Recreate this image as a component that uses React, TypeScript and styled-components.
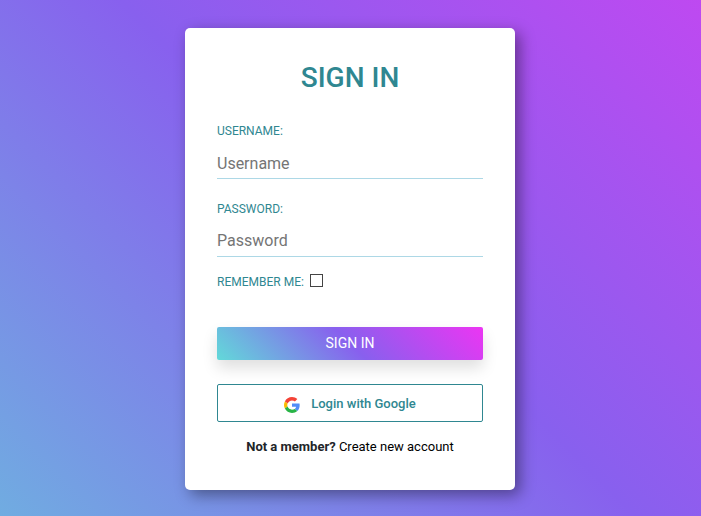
import React from "react";
import styled, { createGlobalStyle } from "styled-components";

const GlobalStyle = createGlobalStyle`
  * { box-sizing: border-box; }
  body { margin: 0; font-family: Roboto, "Liberation Sans", sans-serif; }
`;

const Page = styled.main`
  display: flex;
  justify-content: center;
  align-items: flex-start;
  height: 516px;
  padding: 28px 1px 0 0;
  overflow: hidden;
  background: linear-gradient(45deg, #62d9d9 -30.7%, #8860ee 52.3%, #e937f3 138%);
`;

const Card = styled.form`
  display: flex;
  flex-direction: column;
  width: 330px;
  height: 462px;
  padding: 32px;
  border-radius: 5px;
  background: #fff;
  box-shadow: 5px 5px 15px rgba(0, 0, 0, 0.4);
`;

const Title = styled.h1`
  margin: 0 0 28px;
  color: #2f8791;
  font-size: 28px;
  font-weight: 500;
  line-height: 35px;
  text-align: center;
`;

const Label = styled.label`
  color: #2f8791;
  font-size: 12px;
  line-height: 16px;
`;

const Field = styled.div<{ $gap: number }>`
  display: flex;
  flex-direction: column;
  margin-bottom: ${({ $gap }) => $gap}px;
`;

const Input = styled.input<{ $top?: number }>`
  height: 32px;
  margin-top: 8px;
  padding: ${({ $top = 0 }) => $top}px 0 0;
  border: 0;
  border-bottom: 1px solid lightblue;
  outline: none;
  background: #fff;
  font: 16px Roboto, sans-serif;

  &::placeholder { color: #757575; }
`;

const Remember = styled.div`
  display: flex;
  align-items: center;
  height: 18px;
`;

const Checkbox = styled.input`
  appearance: none;
  width: 13px;
  height: 13px;
  margin: 0 0 3px 6px;
  border: 1px solid #444;
  background: #fff;
`;

const SubmitButton = styled.button`
  height: 33px;
  flex-shrink: 0;
  margin-top: 36px;
  padding: 0 0 2px;
  border: 0;
  border-radius: 2px;
  background: linear-gradient(45deg, #62d9d9, #8860ee, #ec35f3);
  box-shadow: 0 8px 15px rgba(0, 0, 0, 0.13);
  color: #fff;
  font: 14px Roboto, sans-serif;
`;

const GoogleButton = styled.button`
  display: flex;
  justify-content: center;
  align-items: center;
  height: 38px;
  flex-shrink: 0;
  margin-top: 24px;
  padding: 0;
  border: 1px solid #2f8791;
  border-radius: 2px;
  background: #fff;
  color: #2f8791;
  font: 500 13px Roboto, sans-serif;
`;

const GoogleMark = styled.svg`
  width: 16px;
  height: 16px;
  margin: 3px 11px 0 0;
`;

const Footer = styled.p`
  margin: 16px 0 0;
  color: #000;
  font-size: 13px;
  line-height: 18px;
  text-align: center;

  strong { color: #212529; font-weight: 700; }
`;

export default function App() {
  return (
    <>
      <GlobalStyle />
      <Page>
        <Card>
          <Title>SIGN IN</Title>
          <Field $gap={22}>
            <Label htmlFor="username">USERNAME:</Label>
            <Input id="username" placeholder="Username" $top={2} />
          </Field>
          <Field $gap={16}>
            <Label htmlFor="password">PASSWORD:</Label>
            <Input id="password" type="password" placeholder="Password" />
          </Field>
          <Remember>
            <Label htmlFor="remember">REMEMBER ME:</Label>
            <Checkbox id="remember" type="checkbox" />
          </Remember>
          <SubmitButton type="button">SIGN IN</SubmitButton>
          <GoogleButton type="button">
            <GoogleMark viewBox="0 0 48 48" aria-hidden="true">
              <path fill="#f44336" d="M2.6 13.2C6.5 5.4 14.6 0 24 0c6.5 0 11.9 2.4 16.1 6.2l-7.4 7.4C30.3 11.5 27.4 10.2 24 10.2c-6.1 0-11.2 4-13.2 9.4z" />
              <path fill="#518ef8" d="M47 24.6c0-1.8-.2-3.5-.5-5.2H24v10h12.4c-.7 2.7-2.1 4.9-4.3 6.4l7.8 6.4C44.4 38 47 31.8 47 24.6z" />
              <path fill="#fbbb00" d="M10.8 28.6c-.6-1.5-.9-3-.9-4.6s.3-3.1.9-4.6l-8.2-6.2C.9 16.5 0 20.1 0 24s.9 7.5 2.6 10.8z" />
              <path fill="#28b446" d="M24 48c6.5 0 11.9-2.1 15.9-5.8l-7.8-6.4c-2.2 1.4-4.8 2.1-8.1 2.1-6.2 0-11.3-3.9-13.2-9.3l-8.2 6.2C6.5 42.6 14.6 48 24 48z" />
            </GoogleMark>
            Login with Google
          </GoogleButton>
          <Footer><strong>Not a member?</strong> Create new account</Footer>
        </Card>
      </Page>
    </>
  );
}
